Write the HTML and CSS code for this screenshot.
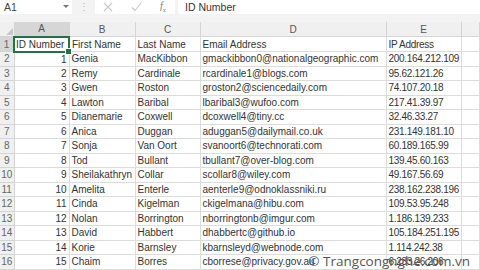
FILE: index.html
```html
<!doctype html>
<html>
<head>
<title>Book1 - Excel</title>
<meta charset="utf-8">
<link rel="stylesheet" href="styles.css">
</head>
<body>
	<div class="formula-bar">
		<div class="name-box">A1<span class="arrow"></span></div>
		<div class="dots">⋮</div>
		<div class="fx-box">
			<svg class="ico" width="10" height="10" viewBox="0 0 10 10"><path d="M1 1L9 9M9 1L1 9" stroke="#c8c8c8" stroke-width="1.1" fill="none"/></svg>
			<svg class="ico" width="11" height="10" viewBox="0 0 11 10"><path d="M1 5.5L4 8.5L10 1" stroke="#c8c8c8" stroke-width="1.1" fill="none"/></svg>
			<span class="fx">f<sub>x</sub></span>
		</div>
		<div class="formula">ID Number</div>
	</div>
	<div class="gap"></div>
	<table class="sheet">
		<colgroup>
			<col class="c-row"><col class="c-a"><col class="c-b"><col class="c-c"><col class="c-d"><col class="c-e"><col>
		</colgroup>
		<thead>
			<tr>
				<th class="corner"><span class="tri"></span></th>
				<th class="sel-col">A</th><th>B</th><th>C</th><th>D</th><th>E</th><th></th>
			</tr>
		</thead>
		<tbody id="rows">
			<tr><th class="sel-row">1</th><td class="active">ID Number</td><td>First Name</td><td>Last Name</td><td>Email Address</td><td class="ip">IP Address</td><td></td></tr>
		</tbody>
	</table>
	<div class="watermark">© Trangcongnghe.com.vn</div>
<script type="text/javascript">
var data = [
	["Genia","MacKibbon","gmackibbon0@nationalgeographic.com","200.164.212.109"],
	["Remy","Cardinale","rcardinale1@blogs.com","95.62.121.26"],
	["Gwen","Roston","groston2@sciencedaily.com","74.107.20.18"],
	["Lawton","Baribal","lbaribal3@wufoo.com","217.41.39.97"],
	["Dianemarie","Coxwell","dcoxwell4@tiny.cc","32.46.33.27"],
	["Anica","Duggan","aduggan5@dailymail.co.uk","231.149.181.10"],
	["Sonja","Van Oort","svanoort6@technorati.com","60.189.165.99"],
	["Tod","Bullant","tbullant7@over-blog.com","139.45.60.163"],
	["Sheilakathryn","Collar","scollar8@wiley.com","49.167.56.69"],
	["Amelita","Enterle","aenterle9@odnoklassniki.ru","238.162.238.196"],
	["Cinda","Kigelman","ckigelmana@hibu.com","109.53.95.248"],
	["Nolan","Borrington","nborringtonb@imgur.com","1.186.139.233"],
	["David","Habbert","dhabbertc@github.io","105.184.251.195"],
	["Korie","Barnsley","kbarnsleyd@webnode.com","1.114.242.38"],
	["Chaim","Borres","cborrese@privacy.gov.au","6.233.26.206"]
];
var tbody = document.getElementById("rows");
var html = "";
for (var i = 0; i < data.length; i++) {
	var d = data[i];
	html += "<tr><th>" + (i + 2) + "</th><td class=\"num\">" + (i + 1) + "</td><td>" + d[0] + "</td><td>" + d[1] + "</td><td>" + d[2] + "</td><td class=\"ip\">" + d[3] + "</td><td></td></tr>";
}
tbody.insertAdjacentHTML("beforeend", html);
</script>
</body>
</html>
```
FILE: styles.css
```css
html, body {
	margin: 0;
	padding: 0;
	overflow: hidden;
	background: #fff;
}
body {
	width: 480px;
	height: 270px;
	position: relative;
	font-family: "Liberation Sans", Arial, sans-serif;
	font-size: 10px;
	color: #333;
}
.formula-bar {
	display: flex;
	height: 14px;
	background: #f3f3f3;
	align-items: stretch;
}
.name-box {
	width: 72px;
	background: #fff;
	padding-left: 4px;
	box-sizing: border-box;
	display: flex;
	align-items: center;
	font-size: 10.5px;
	color: #444;
	position: relative;
}
.arrow {
	position: absolute;
	left: 63px;
	top: 5px;
	border-left: 3px solid transparent;
	border-right: 3px solid transparent;
	border-top: 3px solid #777;
}
.dots {
	width: 23px;
	text-align: center;
	color: #b8b8b8;
	font-size: 10px;
	line-height: 14px;
}
.fx-box {
	width: 80px;
	background: #fff;
	display: flex;
	align-items: center;
	padding-left: 8px;
	gap: 18px;
	box-sizing: border-box;
}
.fx {
	font-family: "Liberation Serif", serif;
	font-style: italic;
	color: #777;
	font-size: 10px;
}
.fx sub {
	font-size: 7px;
}
.formula {
	flex: 1;
	margin-left: 3px;
	background: #fff;
	padding-left: 7px;
	display: flex;
	align-items: center;
	font-size: 10.5px;
	color: #333;
}
.gap {
	height: 8px;
	background: #f3f3f3;
}
.sheet {
	border-collapse: collapse;
	table-layout: fixed;
	width: 480px;
}
.c-row { width: 14px; }
.c-a { width: 55px; }
.c-b { width: 66px; }
.c-c { width: 65px; }
.c-d { width: 186px; }
.c-e { width: 75px; }
.sheet th, .sheet td {
	border: 1px solid #dcdcdc;
	padding: 0 2px;
	white-space: nowrap;
	overflow: hidden;
	text-align: left;
	font-weight: normal;
	height: 13.5px;
	line-height: 13px;
	box-sizing: border-box;
}
.sheet tr {
	height: 14.5px;
}
.sheet thead th {
	background: #f0f0f0;
	text-align: center;
	color: #555;
	border-color: #d4d4d4;
	height: 14px;
	border-top: none;
}
.sheet tbody th {
	background: #f0f0f0;
	color: #666;
	text-align: center;
	padding: 0;
	border-color: #d4d4d4;
}
.sheet th:first-child {
	border-left: none;
}
.sheet thead th.sel-col {
	background: #d6d6d6;
	border-bottom: 2px solid #217346;
}
.sheet tbody th.sel-row {
	background: #d6d6d6;
	border-right: 2px solid #217346;
}
.corner {
	position: relative;
}
.tri {
	position: absolute;
	right: 1px;
	bottom: 1px;
	border-left: 7px solid transparent;
	border-bottom: 7px solid #c8c8c8;
}
.sheet td.num {
	text-align: right;
}
.sheet td.ip {
	letter-spacing: -0.3px;
}
.sheet td.active {
	border: 2px solid #217346;
	position: relative;
	overflow: visible;
	padding-left: 1px;
}
.sheet td.active::after {
	content: "";
	position: absolute;
	right: -4px;
	bottom: -4px;
	width: 5px;
	height: 5px;
	background: #217346;
	border: 1px solid #fff;
}
.watermark {
	position: absolute;
	right: 10px;
	bottom: 1px;
	font-family: "Open Sans", "Liberation Sans", sans-serif;
	font-size: 13.5px;
	color: #555;
	line-height: 16px;
}
```
